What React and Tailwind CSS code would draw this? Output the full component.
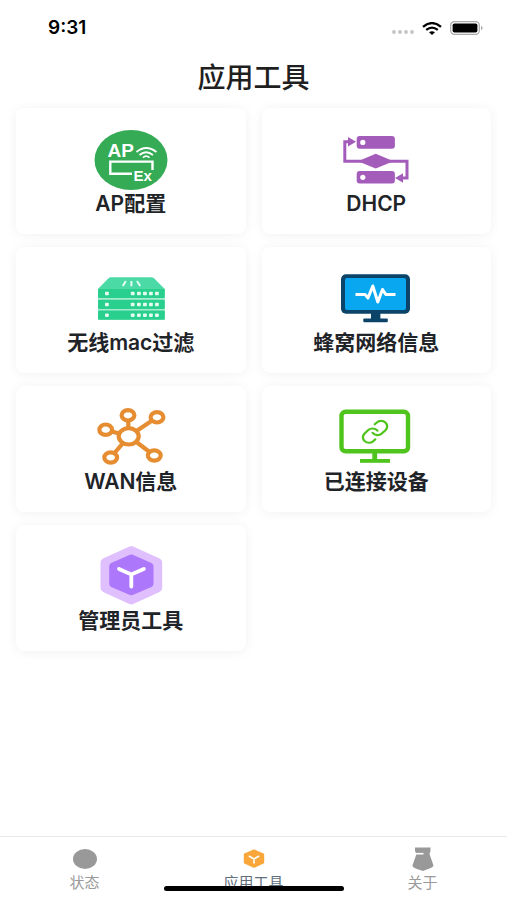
import React, { useState } from 'react';

const ApIcon = () => (
  <svg viewBox="0 0 80 60" className="w-20 h-[60px]" aria-hidden="true">
    <ellipse cx="40" cy="30" rx="36.5" ry="30" fill="#35ab56" />
    <g fill="#fff" fontFamily="Liberation Sans, Arial, sans-serif" fontWeight="bold">
      <text x="16.5" y="27" fontSize="19">AP</text>
      <text x="42.5" y="51" fontSize="15">Ex</text>
    </g>
    <g fill="none" stroke="#fff">
      <path d="M41 43.8H19.3V31.6H61.5V40" strokeWidth="2.4" />
      <path d="M45.5 22Q55 14 65.5 22" strokeWidth="1.7" />
      <path d="M48.5 25Q55 19.5 62 25" strokeWidth="1.7" />
      <path d="M52 27.7Q55 24.7 58.5 27.7" strokeWidth="1.7" />
    </g>
  </svg>
);

const DhcpIcon = () => (
  <svg viewBox="0 0 80 60" className="w-20 h-[60px]" aria-hidden="true">
    <g fill="#a45cbb">
      <rect x="20.7" y="6" width="38.2" height="12.8" rx="3" />
      <rect x="20.7" y="41" width="38.2" height="12.6" rx="3" />
      <path d="M22 31.3L39.7 23.8L57.5 31.3L39.7 38.6Z" />
      <path d="M12 7L20 11.8L12 16.6Z" />
      <path d="M67 43.2L59 48L67 52.8Z" />
    </g>
    <g fill="none" stroke="#a45cbb" strokeWidth="3">
      <path d="M14 11.8H8.8V31.3H28" />
      <path d="M52 31.3H71V48H65" />
    </g>
    <circle cx="26.8" cy="12.4" r="2.6" fill="#fff" />
    <circle cx="26.8" cy="47.3" r="2.6" fill="#fff" />
  </svg>
);

const ServerIcon = () => (
  <svg viewBox="0 0 80 60" className="w-20 h-[60px]" aria-hidden="true">
    <path d="M20 8.2H60.5Q62 8.2 63 9.3L73.7 20H7L17.5 9.3Q18.5 8.2 20 8.2Z" fill="#4bdaa5" />
    <rect x="7" y="19.8" width="66.8" height="31" fill="#a5ecd0" />
    {[19.8, 30.8, 41.5].map((y) => (
      <g key={y}>
        <rect x="7" y={y} width="66.8" height="9.2" rx="1" fill="#29cf8d" />
        <g fill="#e6fbf2">
          {[14, 39.8, 46, 52, 58, 64].map((x) => (
            <rect key={x} x={x} y={y + 3} width="3.8" height="3.4" rx="0.8" />
          ))}
        </g>
      </g>
    ))}
    <path d="M34.8 12L31.8 17M40.4 12V17.2M46 12L49.2 17" stroke="#e6fbf2" strokeWidth="2" />
  </svg>
);

const CellularIcon = () => (
  <svg viewBox="0 0 80 60" className="w-20 h-[60px]" aria-hidden="true">
    <g fill="#0b4468">
      <rect x="5" y="5.3" width="69" height="39.5" rx="5" />
      <rect x="35" y="44" width="9.4" height="7" />
      <rect x="27.3" y="49.5" width="24.5" height="3.8" rx="1" />
    </g>
    <rect x="9" y="9" width="61" height="32" rx="2" fill="#09a7ef" />
    <path
      d="M19.5 25.4H29L32 29L36.8 17L41.8 33L46.5 20.5L49.8 25.4H59.5"
      fill="none"
      stroke="#fff"
      strokeWidth="3"
      strokeLinejoin="round"
    />
  </svg>
);

const WanIcon = () => {
  const nodes = [
    [37, 7.3],
    [66, 9.3],
    [14.7, 21.7],
    [19.7, 49.5],
    [63.3, 47.5],
  ];

  return (
    <svg viewBox="0 0 80 60" className="w-20 h-[60px]" aria-hidden="true">
      <g stroke="#e68d31" strokeWidth="4.2">
        {nodes.map(([x, y]) => (
          <line key={x} x1="37.7" y1="28.3" x2={x} y2={y} />
        ))}
        <g fill="#fff">
          {nodes.map(([x, y]) => (
            <ellipse key={x} cx={x} cy={y} rx="6.4" ry="5.2" />
          ))}
          <ellipse cx="37.7" cy="28.3" rx="10" ry="8.2" />
        </g>
      </g>
    </svg>
  );
};

const DevicesIcon = () => (
  <svg viewBox="0 0 80 60" className="w-20 h-[60px]" aria-hidden="true">
    <rect x="5.5" y="3.8" width="66.5" height="39.5" rx="4" fill="none" stroke="#4fc41c" strokeWidth="4.4" />
    <rect x="36.3" y="45" width="4.8" height="7" fill="#4fc41c" />
    <rect x="24" y="51" width="30" height="3.8" fill="#4fc41c" />
    <g transform="translate(24.4 10.6) scale(1.22 1.1)" fill="none" stroke="#4fc41c" strokeWidth="1.9" strokeLinecap="round">
      <path d="M10 13a5 5 0 0 0 7.54.54l3-3a5 5 0 0 0-7.07-7.07l-1.72 1.71" />
      <path d="M14 11a5 5 0 0 0-7.54-.54l-3 3a5 5 0 0 0 7.07 7.07l1.71-1.71" />
    </g>
  </svg>
);

const AdminIcon = () => (
  <svg viewBox="0 0 80 60" className="w-20 h-[60px] overflow-visible" aria-hidden="true">
    <g strokeLinejoin="round">
      <path d="M40.3 3.5L66.7 15.5V41L40.3 53L14 41V15.5Z" fill="#dfbffd" stroke="#dfbffd" strokeWidth="9" />
      <path d="M40.3 11L59 19.3V36.7L40.3 44.8L21.7 36.7V19.3Z" fill="#ad77fb" stroke="#ad77fb" strokeWidth="7" />
    </g>
    <path
      d="M28 21.9L40.3 27.5L52.8 21.9M40.3 27.5V39.5"
      fill="none"
      stroke="#fff"
      strokeWidth="3.8"
      strokeLinecap="round"
    />
  </svg>
);

const StatusTabIcon = () => (
  <svg viewBox="0 0 24 24" className="w-6 h-6" aria-hidden="true">
    <ellipse cx="12" cy="12" rx="12" ry="10" fill="#999" />
  </svg>
);

const ToolsTabIcon = () => (
  <svg viewBox="0 0 24 24" className="w-6 h-6" aria-hidden="true">
    <path d="M12 3.5L21.2 7.5V15.5L12 19.8L2.8 15.5V7.5Z" fill="#f9a63a" stroke="#f9a63a" strokeWidth="2" strokeLinejoin="round" />
    <path d="M7.3 9.3L12 12L16.7 9.3M12 12V16" fill="none" stroke="#fff" strokeWidth="1.6" strokeLinecap="round" />
  </svg>
);

const AboutTabIcon = () => (
  <svg viewBox="0 0 24 24" className="w-6 h-6" aria-hidden="true">
    <path d="M4 0.5H19.5V4L18.5 7L22.5 18.5Q22 20.5 18.5 21.5L12 24L6 22Q1.8 20.5 1.4 18.5L5.5 7L4 4Z" fill="#999" />
    <path d="M5 6.7H12.5" stroke="#fff" strokeWidth="1.6" />
  </svg>
);

const tools = [
  { label: 'AP配置', icon: ApIcon },
  { label: 'DHCP', icon: DhcpIcon },
  { label: '无线mac过滤', icon: ServerIcon },
  { label: '蜂窝网络信息', icon: CellularIcon },
  { label: 'WAN信息', icon: WanIcon },
  { label: '已连接设备', icon: DevicesIcon },
  { label: '管理员工具', icon: AdminIcon },
];

const tabs = [
  { label: '状态', icon: StatusTabIcon },
  { label: '应用工具', icon: ToolsTabIcon },
  { label: '关于', icon: AboutTabIcon },
];

const StatusBar = () => (
  <div className="flex items-center justify-between h-14 pl-12 pr-6">
    <span className="text-[19px] leading-6 font-semibold text-black">9:31</span>
    <div className="flex items-center gap-2">
      <svg viewBox="0 0 22 12" className="w-[22px] h-3" fill="#c4c4c4" aria-hidden="true">
        <circle cx="2" cy="10" r="1.9" />
        <circle cx="8" cy="10" r="1.9" />
        <circle cx="14" cy="10" r="1.9" />
        <circle cx="20" cy="10" r="1.9" />
      </svg>
      <svg viewBox="0 0 20 13" className="w-5 h-[13px]" aria-hidden="true">
        <path d="M1 4.8Q10 -2.6 19 4.8" fill="none" stroke="#000" strokeWidth="2.3" />
        <path d="M4.2 7.9Q10 3.2 15.8 7.9" fill="none" stroke="#000" strokeWidth="2.2" />
        <path d="M7 10.3Q10 8 13 10.3L10 13Z" fill="#000" />
      </svg>
      <svg viewBox="0 0 33 14" className="w-[33px] h-3.5" aria-hidden="true">
        <rect x="0.7" y="0.7" width="28.6" height="12.6" rx="3.6" fill="none" stroke="#a9a9a9" strokeWidth="1.2" />
        <rect x="2.6" y="2.4" width="24.8" height="9.2" rx="1.8" fill="#000" />
        <path d="M31 4.8Q32.6 5.5 32.6 7T31 9.2Z" fill="#a9a9a9" />
      </svg>
    </div>
  </div>
);

const ToolCard = ({ label, icon: Icon }) => (
  <button
    type="button"
    className="flex flex-col items-center gap-0.5 pt-[22px] pb-[18px] rounded-lg bg-white shadow-[0_1px_12px_rgba(0,0,0,0.06)]"
  >
    <Icon />
    <span className="text-[21px] leading-6 font-semibold text-[#1f2428]">{label}</span>
  </button>
);

export default function App() {
  const [activeTab, setActiveTab] = useState('应用工具');

  return (
    <div className="min-h-screen flex flex-col bg-white font-['Inter','Noto_Sans_CJK_SC',sans-serif]">
      <StatusBar />

      <h1 className="h-[52px] text-center text-[28px] leading-[44px] font-medium text-[#1f1f1f]">应用工具</h1>

      <main className="flex-1 px-4">
        <div className="grid grid-cols-2 gap-x-4 gap-y-[13px]">
          {tools.map((tool) => (
            <ToolCard key={tool.label} label={tool.label} icon={tool.icon} />
          ))}
        </div>
      </main>

      {/* Tab bar */}
      <nav className="relative grid grid-cols-3 h-16 border-t border-[#e8e8e8] bg-white">
        {tabs.map(({ label, icon: Icon }) => (
          <button
            key={label}
            type="button"
            onClick={() => setActiveTab(label)}
            className={`flex flex-col items-center pt-2.5 text-[15px] leading-6 ${
              activeTab === label ? 'text-[#5f6f7b]' : 'text-[#9a9a9a]'
            }`}
          >
            <Icon />
            {label}
          </button>
        ))}
        {/* Home indicator */}
        <div className="absolute bottom-[9px] left-1/2 -translate-x-1/2 w-[180px] h-[5px] rounded-full bg-black" />
      </nav>
    </div>
  );
}
